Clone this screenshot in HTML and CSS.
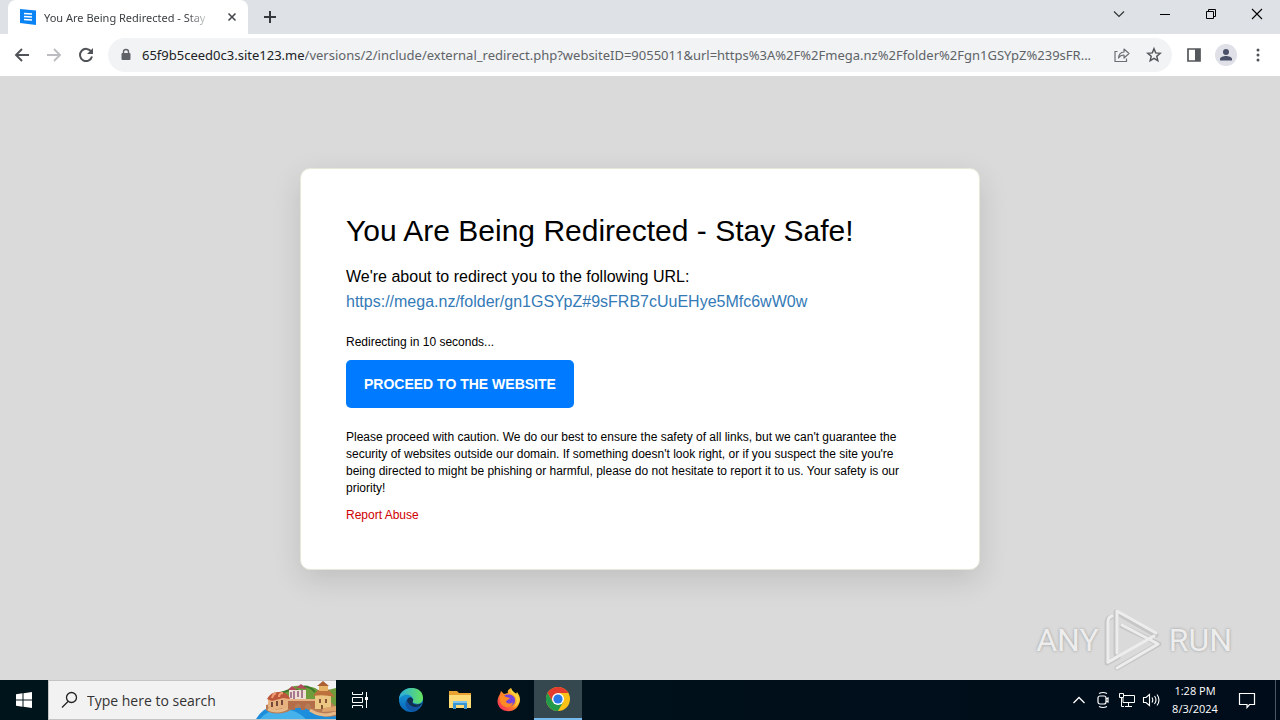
FILE: index.html
```html
<!DOCTYPE html>
<html lang="en">
<head>
  <meta charset="UTF-8">
  <meta name="viewport" content="width=device-width, initial-scale=1.0">
  <title>You Are Being Redirected - Stay Safe!</title>
  <link rel="stylesheet" href="styles.css">
</head>
<body>

  <!-- Tab strip -->
  <header class="tab-strip">
    <div class="tab">
      <svg class="favicon" width="16" height="16" viewBox="0 0 16 16">
        <path d="M0 0l16 1.500v14.500l-16-2z" fill="#0a84f5"/>
        <path d="M4 4.500l8 .5M4 7.500l8 .5M4 10.500l8 .5" stroke="#fff" stroke-width="1.500"/>
      </svg>
      <span class="tab-title">You Are Being Redirected - Stay</span>
      <button class="tab-close" aria-label="Close tab">
        <svg width="16" height="16" viewBox="0 0 16 16"><path d="M4.500 4.500l7 7M11.500 4.500l-7 7" stroke="#45484c" stroke-width="1.600"/></svg>
      </button>
    </div>
    <button class="new-tab" aria-label="New tab">
      <svg width="16" height="16" viewBox="0 0 16 16"><path d="M8 2v12M2 8h12" stroke="#35383d" stroke-width="2"/></svg>
    </button>
    <div class="window-buttons">
      <button aria-label="Search tabs"><svg width="16" height="16" viewBox="0 0 16 16"><path d="M3 5.500l5 5 5-5" fill="none" stroke="#333" stroke-width="1.200"/></svg></button>
      <button aria-label="Minimize"><svg width="16" height="16" viewBox="0 0 16 16"><path d="M3 8.500h10" stroke="#000"/></svg></button>
      <button aria-label="Restore"><svg width="16" height="16" viewBox="0 0 16 16"><path d="M3.500 5.500h7v7h-7zM5.500 5.500v-2h7v7h-2" fill="none" stroke="#000"/></svg></button>
      <button aria-label="Close"><svg width="16" height="16" viewBox="0 0 16 16"><path d="M3 3l10 10M13 3L3 13" stroke="#000" stroke-width="1.100"/></svg></button>
    </div>
  </header>

  <!-- Toolbar -->
  <nav class="toolbar">
    <button aria-label="Back"><svg width="20" height="20" viewBox="0 0 20 20"><path d="M17 10H4.500M10 4L4 10l6 6" fill="none" stroke="#505357" stroke-width="1.900"/></svg></button>
    <button aria-label="Forward"><svg width="20" height="20" viewBox="0 0 20 20"><path d="M3 10h12.500M10 4l6 6-6 6" fill="none" stroke="#bbbdc0" stroke-width="1.900"/></svg></button>
    <button aria-label="Reload"><svg width="20" height="20" viewBox="0 0 20 20"><path d="M15.300 6.800A6.100 6.100 0 1 0 16 11.500" fill="none" stroke="#505357" stroke-width="2"/><path d="M17 3v6h-6z" fill="#505357"/></svg></button>
    <form class="address-bar">
      <svg class="lock" width="12" height="14" viewBox="0 0 12 14"><rect x="1.500" y="5" width="9" height="7" rx="1" fill="#5f6368"/><path d="M3.500 5.500V4a2.500 2.500 0 0 1 5 0v1.500" fill="none" stroke="#5f6368" stroke-width="1.400"/></svg>
      <label for="address">65f9b5ceed0c3.site123.me</label>
      <input type="text" id="address" value="/versions/2/include/external_redirect.php?websiteID=9055011&amp;url=https%3A%2F%2Fmega.nz%2Ffolder%2Fgn1GSYpZ%239sFR...">
      <button type="button" aria-label="Share"><svg width="18" height="18" viewBox="0 0 18 18"><path d="M4.500 5.500h-2.500v10h11.500v-3" fill="none" stroke="#6c7075" stroke-width="1.200"/><path d="M5.500 12c.4-4 2.600-5.800 5.500-6V3l5 4.500-5 4.500V9c-2.500 0-4.200.8-5.500 3z" fill="none" stroke="#6c7075" stroke-width="1.200" stroke-linejoin="round"/></svg></button>
      <button type="button" aria-label="Bookmark"><svg width="18" height="18" viewBox="0 0 18 18"><path d="M9 2.800l1.700 4.100 4.500.4-3.400 3 1 4.400L9 12.400l-3.800 2.300 1-4.400-3.400-3 4.500-.4z" fill="none" stroke="#54575b" stroke-width="1.500"/></svg></button>
    </form>
    <div class="toolbar-right">
      <button aria-label="Side panel"><svg width="16" height="16" viewBox="0 0 16 16"><path d="M2 2h12v12H2z" fill="none" stroke="#54575b" stroke-width="1.700"/><path d="M9 2h5v12H9z" fill="#54575b"/></svg></button>
      <button class="profile" aria-label="Profile"><svg width="16" height="16" viewBox="0 0 16 16"><circle cx="8" cy="5" r="3" fill="#4a5068"/><path d="M2 13.500V12c0-2 3.500-3 6-3s6 1 6 3v1.500z" fill="#4a5068"/></svg></button>
      <button aria-label="Menu"><svg width="16" height="16" viewBox="0 0 16 16" fill="#505357"><circle cx="8" cy="3" r="1.500"/><circle cx="8" cy="8" r="1.500"/><circle cx="8" cy="13" r="1.500"/></svg></button>
    </div>
  </nav>

  <!-- Redirect notice -->
  <main class="page">
    <div class="card">
      <h1>You Are Being Redirected - Stay Safe!</h1>
      <p class="lead">We're about to redirect you to the following URL:<br><a href="https://mega.nz/folder/gn1GSYpZ#9sFRB7cUuEHye5Mfc6wW0w">https://mega.nz/folder/gn1GSYpZ#9sFRB7cUuEHye5Mfc6wW0w</a></p>
      <p class="countdown">Redirecting in 10 seconds...</p>
      <button class="proceed-btn">PROCEED TO THE WEBSITE</button>
      <p class="caution">Please proceed with caution. We do our best to ensure the safety of all links, but we can't guarantee the security of websites outside our domain. If something doesn't look right, or if you suspect the site you're being directed to might be phishing or harmful, please do not hesitate to report it to us. Your safety is our priority!</p>
      <a class="report" href="#report">Report Abuse</a>
    </div>
    <div class="watermark">
      <span>ANY</span>
      <svg width="60" height="64" viewBox="0 0 60 64" fill="none" stroke-linecap="round" stroke-linejoin="round">
        <g stroke="#c6c6c6" stroke-width="5"><path d="M7 9Q3 10 3 15v40l11-6"/><path d="M12 46V4l40 23"/><path d="M18 18l37 18-42 24"/></g>
        <g stroke="#ededed" stroke-width="3"><path d="M8 8Q4 9 4 14v40l9-5"/><path d="M13 45V3l39 22"/><path d="M18 17l36 19-41 24"/><path d="M4 54l46-26"/></g>
      </svg>
      <span>RUN</span>
    </div>
  </main>

  <!-- Taskbar -->
  <footer class="taskbar">
    <button class="start" aria-label="Start"><svg width="16" height="16" viewBox="0 0 16 16" fill="#fff"><path d="M0 2.200L6.500 1.300v6.200H0zM7.500 1.200L16 0v7.500H7.500zM0 8.500h6.500v6.200L0 13.800zM7.500 8.500H16V16l-8.500-1.200z"/></svg></button>
    <div class="search">
      <svg class="search-icon" width="18" height="18" viewBox="0 0 18 18" fill="none" stroke="#222" stroke-width="1.300"><circle cx="10.500" cy="6.500" r="5"/><path d="M7 10.500L1 16.500"/></svg>
      <input type="text" aria-label="Search" placeholder="Type here to search">
      <svg class="search-art" width="80" height="38" viewBox="0 0 80 38">
        <path d="M14 20Q20 9 30 10 38 2 48 6q12-1 16 5l16-4v18H14z" fill="#6f9d3c"/>
        <path d="M22 14q10-6 20-5M45 6q8-2 14 5" stroke="#3f772c" stroke-width="2" fill="none"/>
        <path d="M0 38Q7 26 22 24l58 4v10z" fill="#1c8edb"/>
        <path d="M4 38Q12 28 25 29q14-2 25 9" fill="#45b2ec"/>
        <path d="M10 24l14-4h50l6 6v9Q65 38 55 30q-12-7-24 1-14 4-21-2z" fill="#b77c55"/>
        <path d="M12 28q12 5 22-3M54 29q12 8 26 3" stroke="#e7b989" stroke-width="3" fill="none"/>
        <path d="M33 9h17v12H33z" fill="#eee0d5"/><path d="M32 9l4-4 5 4M40 7l5-4 6 5" fill="#b5485d"/>
        <path d="M35 11v6M38 10v8M42 10v6M46 9v8" stroke="#a8798f" stroke-width="2"/>
        <path d="M12 18l17-4 5 3v9l-18 3-4-3z" fill="#e8b180"/>
        <path d="M11 18q4-8 13-7 8 0 10 7l-7-1-11 3z" fill="#bd573b"/>
        <path d="M16 17q1-4 4-5M23 16q0-4 4-4" stroke="#f19b70" stroke-width="2" fill="none"/>
        <path d="M16 21v5M21 20v5M26 19v5" stroke="#76483c" stroke-width="2"/>
        <path d="M32 19h28v7l-5 2v-3q-3-5-6 0v4h-4v-4q-3-5-6 0v4l-7-1z" fill="#b36e49"/>
        <path d="M32 19h27" stroke="#e6b184" stroke-width="2"/>
        <path d="M59 14h16v14H59z" fill="#ecc783"/><path d="M57 15l5-6 10-1 7 8q-12-3-22-1z" fill="#bd713d"/>
        <path d="M63 5h9v5h-9z" fill="#e6b265"/><path d="M61 5l6-5 6 5z" fill="#ac6135"/>
        <path d="M64 18v4M70 18v4M66 24v4" stroke="#875533" stroke-width="2"/>
        <path d="M67 27l13-2v5l-14 1z" fill="#dda36b"/>
      </svg>
    </div>
    <div class="apps">
      <button aria-label="Task View"><svg width="18" height="18" viewBox="0 0 18 18" fill="none" stroke="#fff"><path d="M1.500 1v2.500h10V1M1.500 17v-2.500h10V17M1.500 6.500h10v5h-10zM15.500 1v16"/><path d="M14 6h3v3h-3z" fill="#fff" stroke="none"/></svg></button>
      <button aria-label="Edge"><svg width="24" height="24" viewBox="0 0 24 24">
        <defs>
          <linearGradient id="edge-top"><stop offset="0" stop-color="#2badde"/><stop offset="1" stop-color="#66e45c"/></linearGradient>
          <linearGradient id="edge-side" x2="0" y2="1"><stop offset="0" stop-color="#1ba4df"/><stop offset="1" stop-color="#0864b7"/></linearGradient>
        </defs>
        <circle cx="12" cy="12" r="12" fill="url(#edge-side)"/>
        <path d="M0 11C1-3 24-4 24 10c0 5-5 7-9 5-3-1 0-2-1-4C12 5 4 5 0 11z" fill="url(#edge-top)"/>
        <path d="M8 12c1-3 4-4 6-1 1 2-2 3 1 5 3 1 6 0 8-1-2 8-19 5-15-3z" fill="#11304f"/>
        <path d="M8 12c-4 5 1 12 7 11 4-1 7-4 8-7-4 5-13 4-15-4z" fill="#1254a1"/>
      </svg></button>
      <button aria-label="File Explorer"><svg width="22" height="20" viewBox="0 0 22 20"><path d="M0 1h8l2 2h12v15H0z" fill="#e8a333"/><path d="M0 5h22v13H0z" fill="#ffdb78"/><path d="M4 19v-8h14v8h-3v-4H7v4z" fill="#3995d1"/><path d="M4 11h14v2H4z" fill="#7fc5ee"/></svg></button>
      <button aria-label="Firefox"><svg width="24" height="24" viewBox="0 0 24 24">
        <defs><linearGradient id="fire" x1="1" x2="0" y2="1"><stop offset="0" stop-color="#fff044"/><stop offset=".5" stop-color="#ff8c20"/><stop offset="1" stop-color="#f5156c"/></linearGradient></defs>
        <path d="M3 6l1-3 3 3 4-1c-1-2 1-4 3-5 0 3 3 4 5 6l1-2c3 4 4 8 2 12-2 5-7 8-12 7C3 23-3 15 3 6z" fill="url(#fire)"/>
        <path d="M7 8c4-3 12-1 11 5 0 5-8 7-11 2-1-2-1-4 0-7z" fill="#7544dc"/>
        <path d="M3 8c3-1 5 0 6 1l4 1c-1 2-4 2-4 4 2 2 5 2 7 0-1 7-11 7-13-1z" fill="#ff8b24"/>
        <path d="M14 5c7 3 7 11 2 14 5-1 7-6 6-10-2-4-6-4-8-9z" fill="#ffd23d"/>
      </svg></button>
      <button class="active" aria-label="Chrome"><svg width="24" height="24" viewBox="0 0 24 24"><circle cx="12" cy="12" r="12" fill="#fbc116"/><path d="M1.600 6A12 12 0 0 1 22.400 6H12L6.800 15z" fill="#e33b2e"/><path d="M1.600 6A12 12 0 0 0 12 24l5.200-9L12 12l-5.200 3z" fill="#229a49"/><circle cx="12" cy="12" r="6" fill="#fff"/><circle cx="12" cy="12" r="4.600" fill="#2878e8"/></svg></button>
    </div>
    <div class="tray">
      <button aria-label="Hidden icons"><svg width="16" height="16" viewBox="0 0 16 16"><path d="M2.500 11L8 5.500l5.500 5.500" fill="none" stroke="#fff" stroke-width="1.300"/></svg></button>
      <button aria-label="Meet Now"><svg width="16" height="18" viewBox="0 0 16 18" fill="none" stroke="#fff" stroke-width="1.200"><rect x="3" y="5" width="8" height="8" rx="2"/><path d="M11 8l2-1v4l-2-1M4 2.500q4-2 8 0M4 15.500q4 2 8 0"/></svg></button>
      <button aria-label="Network"><svg width="18" height="16" viewBox="0 0 18 16" fill="none" stroke="#fff"><path d="M6 3.500h10.500v7H5V6M10.500 11v3M7 14.500h7M1.500 1.500h4v4h-4zM3.500 6v8.500H6"/></svg></button>
      <button aria-label="Volume"><svg width="18" height="16" viewBox="0 0 18 16" fill="none" stroke="#fff" stroke-width="1.100"><path d="M1.500 5.500h2.500l3.500-3v11L4 10.500H1.500zM10 5.500q1.500 2.500 0 5M12.500 4q3 4 0 8M15 2.500q4 5.500 0 11"/></svg></button>
      <div class="clock"><span>1:28 PM</span><span>8/3/2024</span></div>
      <button class="notify" aria-label="Notifications"><svg width="18" height="18" viewBox="0 0 18 18"><path d="M1.500 2.500h15v11h-5l-2.500 3v-3H1.500z" fill="none" stroke="#fff" stroke-width="1.200"/></svg></button>
    </div>
  </footer>

</body>
</html>
```
FILE: styles.css
```css
* {
  box-sizing: border-box;
}

body {
  margin: 0;
  min-height: 100vh;
  display: flex;
  flex-direction: column;
  font-family: "Liberation Sans", Arial, sans-serif;
  background-color: #dadada;
}

button {
  display: flex;
  align-items: center;
  justify-content: center;
  padding: 0;
  border: none;
  background: none;
  cursor: pointer;
}

svg {
  display: block;
  flex-shrink: 0;
}

/* Tab strip */
.tab-strip {
  display: flex;
  height: 34px;
  padding-left: 8px;
  background-color: #dee1e6;
}

.tab {
  display: flex;
  align-items: center;
  width: 240px;
  padding: 0 8px 0 12px;
  border-radius: 8px 8px 0 0;
  background-color: white;
}

.tab-title {
  flex: 1;
  margin: 0 12px 0 8px;
  font-family: "Noto Sans", sans-serif;
  font-size: 11px;
  color: #3c4043;
  white-space: nowrap;
  overflow: hidden;
  mask-image: linear-gradient(to right, black 85%, transparent);
}

.new-tab {
  width: 28px;
  margin-left: 8px;
}

.window-buttons {
  display: flex;
  margin-left: auto;
  height: 28px;
}

.window-buttons button {
  width: 46px;
}

/* Toolbar */
.toolbar {
  display: flex;
  align-items: center;
  height: 42px;
  padding: 0 11px 0 6px;
  background-color: white;
}

.toolbar > button {
  width: 32px;
  height: 32px;
}

.address-bar {
  flex: 1;
  min-width: 0;
  display: flex;
  align-items: center;
  height: 34px;
  margin-left: 6px;
  padding: 0 2px 0 12px;
  border-radius: 17px;
  background-color: #f1f3f4;
  font-family: "Noto Sans", sans-serif;
  font-size: 13px;
  color: #202124;
}

.lock {
  margin-right: 10px;
}

.address-bar input {
  flex: 1;
  min-width: 0;
  padding: 0;
  border: none;
  outline: none;
  background: none;
  font: inherit;
  color: #5f6368;
}

.address-bar button {
  width: 32px;
  height: 32px;
}

.toolbar-right {
  display: flex;
  align-items: center;
  gap: 10px;
  margin-left: 11px;
}

.toolbar-right button {
  width: 22px;
  height: 22px;
}

.toolbar-right .profile {
  border-radius: 50%;
  background-color: #dfe0e8;
}

/* Page */
.page {
  flex: 1;
  position: relative;
  padding: 92px 20px;
}

.card {
  max-width: 680px;
  margin: 0 auto;
  padding: 45px;
  border: 1px solid #e8e8d8;
  border-radius: 10px;
  background-color: white;
  box-shadow: 0 10px 30px rgba(0, 0, 0, 0.12);
}

h1 {
  margin: 0 0 16px;
  font-size: 30px;
  font-weight: normal;
  line-height: 34px;
}

.lead {
  margin: 0 0 20px;
  font-size: 16px;
  line-height: 25px;
}

.lead a {
  color: #337ab7;
  text-decoration: none;
}

.countdown {
  margin: 0 0 9px;
  font-size: 12px;
  line-height: 17px;
}

.proceed-btn {
  height: 48px;
  padding: 0 18px;
  border-radius: 5px;
  background-color: #007bff;
  font-family: inherit;
  font-size: 14px;
  font-weight: bold;
  color: white;
}

.caution {
  max-width: 570px;
  margin: 21px 0 10px;
  font-size: 12px;
  line-height: 17px;
}

.report {
  display: block;
  font-size: 12px;
  line-height: 17px;
  color: #d00000;
  text-decoration: none;
}

.watermark {
  position: absolute;
  right: 48px;
  bottom: 8px;
  display: flex;
  align-items: center;
  gap: 5px;
  font-family: Roboto, sans-serif;
  font-size: 32px;
  color: #ededed;
  text-shadow: 0 0 3px #999;
}

/* Taskbar */
.taskbar {
  display: flex;
  height: 40px;
  background: linear-gradient(to right, #00151b, #000c1a);
}

.start {
  width: 48px;
}

.search {
  display: flex;
  align-items: center;
  width: 288px;
  padding-left: 12px;
  border: 1px solid #c4c4c4;
  border-right: none;
  background-color: #f2f2f2;
}

.search input {
  flex: 1;
  min-width: 0;
  padding: 0 0 0 8px;
  border: none;
  outline: none;
  background: none;
  font-family: "Open Sans", sans-serif;
  font-size: 14px;
}

.search input::placeholder {
  color: #333;
  opacity: 1;
}

.apps {
  display: flex;
  gap: 1px;
}

.apps button {
  width: 48px;
}

.apps button:first-child {
  margin-right: 2px;
}

.apps .active {
  border-bottom: 2px solid #76b9ed;
  background-color: #354850;
}

.tray {
  display: flex;
  margin-left: auto;
  margin-right: 4px;
  border-right: 1px solid #4d5662;
}

.tray button {
  width: 24px;
}

.clock {
  display: flex;
  flex-direction: column;
  justify-content: center;
  width: 64px;
  font-family: "Open Sans", sans-serif;
  font-size: 11px;
  line-height: 18px;
  text-align: center;
  color: white;
}

.tray .notify {
  width: 40px;
  margin-right: 8px;
}
```
